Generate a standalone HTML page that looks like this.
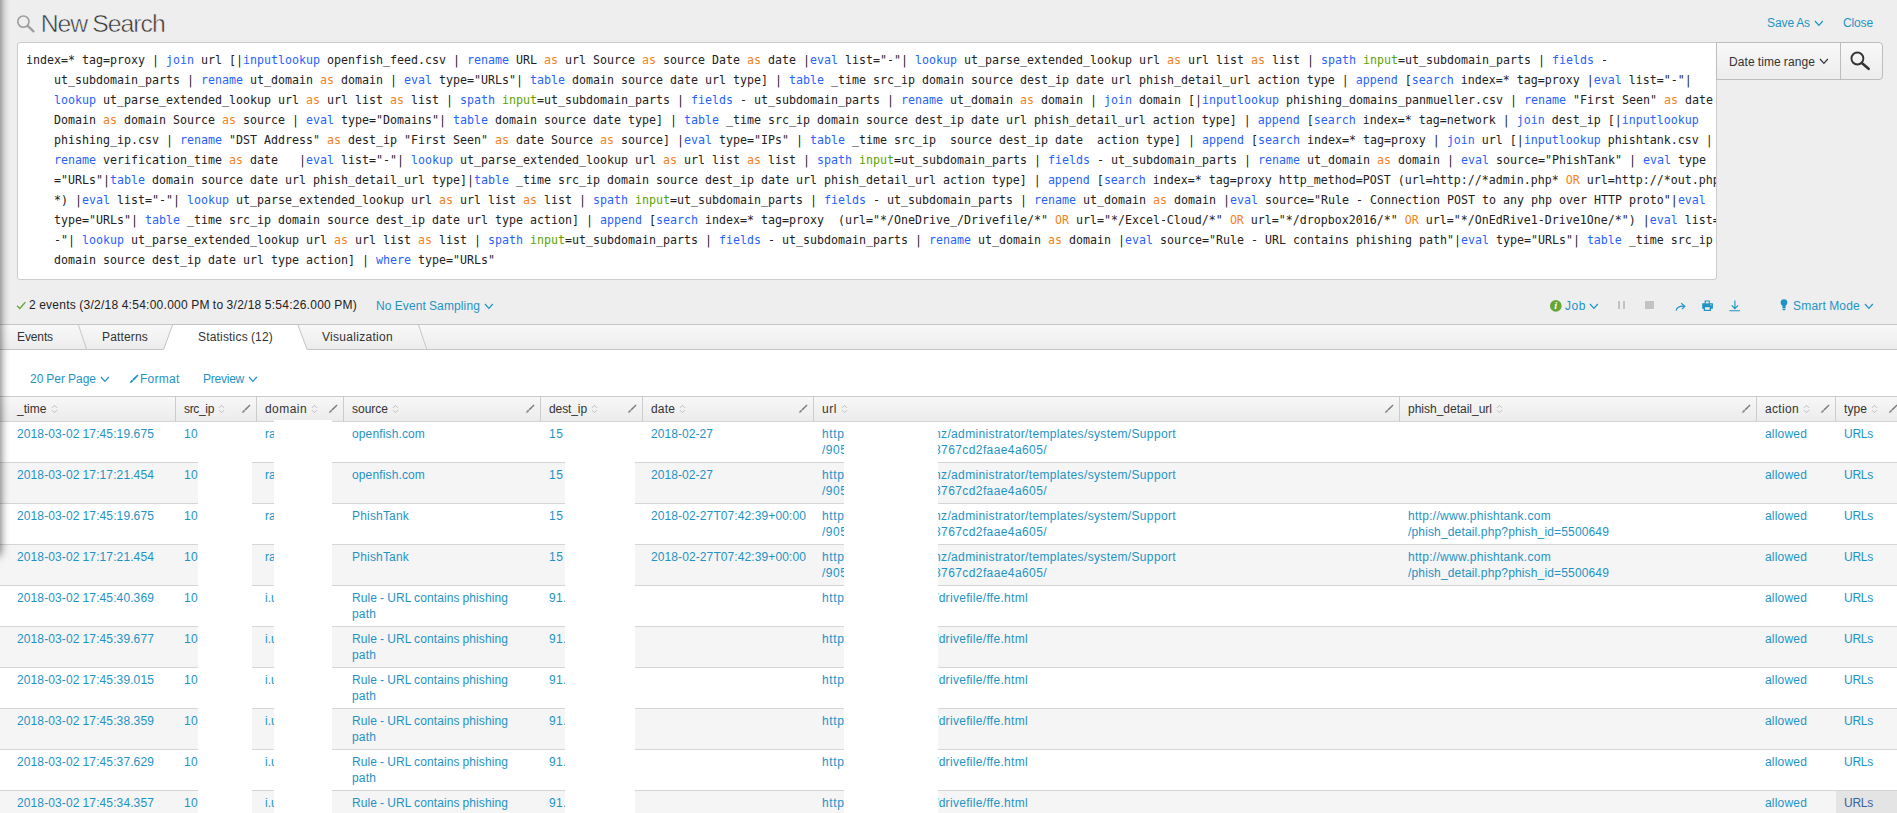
<!DOCTYPE html>
<html><head><meta charset="utf-8"><title>New Search</title>
<style>
*{box-sizing:border-box}
html,body{margin:0;padding:0}
body{width:1897px;height:813px;overflow:hidden;background:#eee;position:relative;font-family:"Liberation Sans",sans-serif;font-size:12px;color:#333}
.abs{position:absolute;white-space:nowrap}
.lnk{color:#1e93c6}
#title{left:41px;top:9px;font-size:24px;line-height:28px;color:#333;letter-spacing:-0.2px}
#qbox{position:absolute;left:17px;top:42px;width:1700px;height:238px;background:#fff;border:1px solid #ccc;border-radius:3px 0 3px 3px;overflow:hidden}
.ql{position:absolute;left:36px;white-space:pre;font-family:"DejaVu Sans Mono",monospace;font-size:11.63px;line-height:20px;height:20px;color:#222}
.q0{left:8px}
.ql b{font-weight:normal;color:#2662fc}
.ql i{font-style:normal;color:#f58220}
.ql u{text-decoration:none;color:#5ba300}
#trbtn{position:absolute;left:1716px;top:42px;width:125px;height:38px;border:1px solid #bcbcbc;border-right:none;background:linear-gradient(#f8f8f8,#ececec);}
#sbtn{position:absolute;left:1840px;top:42px;width:43px;height:38px;border:1px solid #bcbcbc;border-radius:0 4px 4px 0;background:linear-gradient(#f8f8f8,#ececec)}
#tabs{position:absolute;left:0;top:324px;width:1897px;height:26px;border-top:1px solid #c6c6c6;border-bottom:1px solid #c6c6c6;background:linear-gradient(#f8f8f8,#ececec)}
#white{position:absolute;left:0;top:350px;width:1897px;height:463px;background:#fff}
#thead{position:absolute;left:0;top:396px;width:1897px;height:26px;border-top:1px solid #ccc;border-bottom:1px solid #bbb;background:linear-gradient(#f7f7f7,#ececec)}
.th{position:absolute;top:396px;height:26px;border-left:1px solid #ccc;padding-left:8px;line-height:25px;font-size:12px;color:#333;white-space:nowrap}
.row{position:absolute;left:0;width:1897px;height:41px;border-top:1px solid #d5d5d5}
.odd{background:#f5f5f5}
.c{position:absolute;top:4px;line-height:16px;font-size:12px;color:#1e93c6;white-space:nowrap}
.red{position:absolute;background:#fff}
</style></head><body>
<svg class="abs" style="left:15px;top:13px" width="22" height="22" viewBox="0 0 22 22"><circle cx="8.4" cy="8.6" r="5.6" fill="none" stroke="#9e9e9e" stroke-width="1.6"/><path d="M12.7 12.9 L18.5 18.4" stroke="#9e9e9e" stroke-width="2.3" stroke-linecap="round"/></svg>
<div class="abs" style="left:40.7px;top:10px;line-height:28px;font-size:24.8px;letter-spacing:-1.025px;word-spacing:-0.83px;color:#333;-webkit-text-stroke:0.55px #eee;">New Search</div>
<div class="abs" style="left:1767px;top:15px;line-height:16px;letter-spacing:-0.092px;word-spacing:-0.4px;color:#1e93c6;">Save As</div>
<svg class="abs" style="left:1814px;top:20px" width="9.8" height="6.8" viewBox="-1 -1 9.8 6.8"><path d="M0 0 L3.9 4.3 L7.8 0" fill="none" stroke="#1e93c6" stroke-width="1.25"/></svg>
<div class="abs" style="left:1843px;top:15px;line-height:16px;letter-spacing:-0.138px;color:#1e93c6;">Close</div>
<div id="qbox">
<div style="top:7px" class="ql q0">index=* tag=proxy | <b>join</b> url [|<b>inputlookup</b> openfish_feed.csv | <b>rename</b> URL <i>as</i> url Source <i>as</i> source Date <i>as</i> date |<b>eval</b> list="-"| <b>lookup</b> ut_parse_extended_lookup url <i>as</i> url list <i>as</i> list | <b>spath</b> <u>input</u>=ut_subdomain_parts | <b>fields</b> - </div>
<div style="top:27px" class="ql">ut_subdomain_parts | <b>rename</b> ut_domain <i>as</i> domain | <b>eval</b> type="URLs"| <b>table</b> domain source date url type] | <b>table</b> _time src_ip domain source dest_ip date url phish_detail_url action type | <b>append</b> [<b>search</b> index=* tag=proxy |<b>eval</b> list="-"| </div>
<div style="top:47px" class="ql"><b>lookup</b> ut_parse_extended_lookup url <i>as</i> url list <i>as</i> list | <b>spath</b> <u>input</u>=ut_subdomain_parts | <b>fields</b> - ut_subdomain_parts | <b>rename</b> ut_domain <i>as</i> domain | <b>join</b> domain [|<b>inputlookup</b> phishing_domains_panmueller.csv | <b>rename</b> "First Seen" <i>as</i> date </div>
<div style="top:67px" class="ql">Domain <i>as</i> domain Source <i>as</i> source | <b>eval</b> type="Domains"| <b>table</b> domain source date type] | <b>table</b> _time src_ip domain source dest_ip date url phish_detail_url action type] | <b>append</b> [<b>search</b> index=* tag=network | <b>join</b> dest_ip [|<b>inputlookup</b> </div>
<div style="top:87px" class="ql">phishing_ip.csv | <b>rename</b> "DST Address" <i>as</i> dest_ip "First Seen" <i>as</i> date Source <i>as</i> source] |<b>eval</b> type="IPs" | <b>table</b> _time src_ip  source dest_ip date  action type] | <b>append</b> [<b>search</b> index=* tag=proxy | <b>join</b> url [|<b>inputlookup</b> phishtank.csv | </div>
<div style="top:107px" class="ql"><b>rename</b> verification_time <i>as</i> date   |<b>eval</b> list="-"| <b>lookup</b> ut_parse_extended_lookup url <i>as</i> url list <i>as</i> list | <b>spath</b> <u>input</u>=ut_subdomain_parts | <b>fields</b> - ut_subdomain_parts | <b>rename</b> ut_domain <i>as</i> domain | <b>eval</b> source="PhishTank" | <b>eval</b> type </div>
<div style="top:127px" class="ql">="URLs"|<b>table</b> domain source date url phish_detail_url type]|<b>table</b> _time src_ip domain source dest_ip date url phish_detail_url action type] | <b>append</b> [<b>search</b> index=* tag=proxy http_method=POST (url=http://*admin.php* <i>OR</i> url=http://*out.php</div>
<div style="top:147px" class="ql">*) |<b>eval</b> list="-"| <b>lookup</b> ut_parse_extended_lookup url <i>as</i> url list <i>as</i> list | <b>spath</b> <u>input</u>=ut_subdomain_parts | <b>fields</b> - ut_subdomain_parts | <b>rename</b> ut_domain <i>as</i> domain |<b>eval</b> source="Rule - Connection POST to any php over HTTP proto"|<b>eval</b> </div>
<div style="top:167px" class="ql">type="URLs"| <b>table</b> _time src_ip domain source dest_ip date url type action] | <b>append</b> [<b>search</b> index=* tag=proxy  (url="*/OneDrive_/Drivefile/*" <i>OR</i> url="*/Excel-Cloud/*" <i>OR</i> url="*/dropbox2016/*" <i>OR</i> url="*/OnEdRive1-Drive1One/*") |<b>eval</b> list=</div>
<div style="top:187px" class="ql">-"| <b>lookup</b> ut_parse_extended_lookup url <i>as</i> url list <i>as</i> list | <b>spath</b> <u>input</u>=ut_subdomain_parts | <b>fields</b> - ut_subdomain_parts | <b>rename</b> ut_domain <i>as</i> domain |<b>eval</b> source="Rule - URL contains phishing path"|<b>eval</b> type="URLs"| <b>table</b> _time src_ip </div>
<div style="top:207px" class="ql">domain source dest_ip date url type action] | <b>where</b> type="URLs"</div>
</div>
<div id="trbtn"></div><div id="sbtn"></div>
<div class="abs" style="left:1729px;top:54px;line-height:16px;letter-spacing:0.095px;word-spacing:-0.4px;color:#333;">Date time range</div>
<svg class="abs" style="left:1819px;top:58px" width="9.8" height="6.8" viewBox="-1 -1 9.8 6.8"><path d="M0 0 L3.9 4.3 L7.8 0" fill="none" stroke="#333" stroke-width="1.25"/></svg>
<svg class="abs" style="left:1848px;top:48px" width="26" height="26" viewBox="0 0 26 26"><circle cx="9.4" cy="10.5" r="5.95" fill="none" stroke="#333" stroke-width="1.9"/><path d="M13.8 15 L20.6 20.8" stroke="#333" stroke-width="2.6" stroke-linecap="round"/></svg>
<svg class="abs" style="left:16px;top:300px" width="11" height="10" viewBox="0 0 11 10"><path d="M1 5.8 L3.8 8.5 L9.3 2.2" fill="none" stroke="#65a637" stroke-width="1.3"/></svg>
<div class="abs" style="left:29px;top:297px;line-height:16px;letter-spacing:0.263px;word-spacing:-0.4px;color:#222;">2 events (3/2/18 4:54:00.000 PM to 3/2/18 5:54:26.000 PM)</div>
<div class="abs" style="left:376px;top:298px;line-height:16px;letter-spacing:0.122px;word-spacing:-0.4px;color:#1e93c6;">No Event Sampling</div>
<svg class="abs" style="left:484px;top:303px" width="9.8" height="6.8" viewBox="-1 -1 9.8 6.8"><path d="M0 0 L3.9 4.3 L7.8 0" fill="none" stroke="#1e93c6" stroke-width="1.25"/></svg>
<svg class="abs" style="left:1549px;top:299px" width="14" height="14" viewBox="0 0 14 14"><circle cx="6.8" cy="6.9" r="5.85" fill="#65a637"/><text x="6.8" y="10.4" font-family="Liberation Serif,serif" font-style="italic" font-weight="bold" font-size="10.5" fill="#fff" text-anchor="middle">i</text></svg>
<div class="abs" style="left:1565px;top:298px;line-height:16px;letter-spacing:0.547px;color:#1e93c6;">Job</div>
<svg class="abs" style="left:1589px;top:303px" width="9.8" height="6.8" viewBox="-1 -1 9.8 6.8"><path d="M0 0 L3.9 4.3 L7.8 0" fill="none" stroke="#1e93c6" stroke-width="1.25"/></svg>
<div class="abs" style="left:1618px;top:301px;width:2.3px;height:8.3px;background:#c3c3c3"></div><div class="abs" style="left:1623px;top:301px;width:2.3px;height:8.3px;background:#c3c3c3"></div>
<div class="abs" style="left:1645px;top:301px;width:8.6px;height:8.2px;background:#c3c3c3"></div>
<svg class="abs" style="left:1674px;top:299px" width="14" height="14" viewBox="0 0 14 14"><path d="M2 11.7 C2.8 8.6 5.6 6.9 10.4 7.2" fill="none" stroke="#1e93c6" stroke-width="1.15"/><path d="M7.2 4.2 L10.8 7.2 L8 10.2" fill="none" stroke="#1e93c6" stroke-width="1.15"/></svg>
<svg class="abs" style="left:1700px;top:299px" width="14" height="14" viewBox="0 0 14 14"><path d="M4.6 1.4h5.2v2.9h3.1v5.4h-1.9v2.3H3.7V9.7H2.2V4.3h2.4z" fill="#1e93c6"/><rect x="5.8" y="2.5" width="2.9" height="1.9" fill="#eee"/><rect x="5" y="8.2" width="4.6" height="2.6" fill="#eee"/><rect x="10.4" y="5.4" width="1.2" height="1" fill="#eee"/></svg>
<svg class="abs" style="left:1727px;top:299px" width="14" height="14" viewBox="0 0 14 14"><path d="M7.9 1.6 V9.4 M4.7 6.4 L7.9 9.6 L11.1 6.4 M2.4 11.7 H13" fill="none" stroke="#1e93c6" stroke-width="1.15"/></svg>
<svg class="abs" style="left:1777.7px;top:298px" width="12" height="14" viewBox="0 0 12 14"><circle cx="6" cy="4.6" r="3.3" fill="#1e93c6"/><rect x="4.4" y="7" width="3.2" height="3.4" fill="#1e93c6"/><rect x="4.6" y="11" width="2.8" height="1.2" fill="#1e93c6"/></svg>
<div class="abs" style="left:1793px;top:298px;line-height:16px;letter-spacing:0.203px;word-spacing:-0.4px;color:#1e93c6;">Smart Mode</div>
<svg class="abs" style="left:1864px;top:303px" width="9.8" height="6.8" viewBox="-1 -1 9.8 6.8"><path d="M0 0 L3.9 4.3 L7.8 0" fill="none" stroke="#1e93c6" stroke-width="1.25"/></svg>
<div id="tabs"></div><div id="white"></div>
<svg class="abs" style="left:0;top:324px" width="450" height="26" viewBox="0 0 450 26"><path d="M163.7 25.5 L172.7 0.5 L297.8 0.5 L307.1 25.5 V26 H163 Z" fill="#fff" stroke="none"/><path d="M163.7 25.5 L172.7 0.5 H297.8 L307.1 25.5" fill="none" stroke="#c3c3c3" stroke-width="1"/><path d="M78.3 0.5 L86.7 25.5 M418.4 0.5 L426.8 25.5" fill="none" stroke="#c6c6c6"/><rect x="164.6" y="25" width="142" height="1" fill="#fff"/></svg>
<div class="abs" style="left:17px;top:329px;line-height:16px;letter-spacing:-0.115px;color:#333;">Events</div>
<div class="abs" style="left:102px;top:329px;line-height:16px;letter-spacing:0.162px;color:#333;">Patterns</div>
<div class="abs" style="left:198px;top:329px;line-height:16px;letter-spacing:0.18px;word-spacing:-0.4px;color:#333;">Statistics (12)</div>
<div class="abs" style="left:322px;top:329px;line-height:16px;letter-spacing:0.296px;color:#333;">Visualization</div>
<div class="abs" style="left:30px;top:371px;line-height:16px;letter-spacing:0.007px;word-spacing:-0.4px;color:#1e93c6;">20 Per Page</div>
<svg class="abs" style="left:100px;top:376px" width="9.8" height="6.8" viewBox="-1 -1 9.8 6.8"><path d="M0 0 L3.9 4.3 L7.8 0" fill="none" stroke="#1e93c6" stroke-width="1.25"/></svg>
<svg class="abs" style="left:128.6px;top:374px" width="10" height="10" viewBox="0 0 10 10"><path d="M8.4 0.4 L9.5 1.5 L4.7 6.7 L3.3 5.3 Z" fill="#1e93c6"/><path d="M3 5.7 L4.3 7 C3.7 8.5 2 9 0.4 8.7 C1.5 8 1.5 6.3 3 5.7 Z" fill="#1e93c6"/></svg>
<div class="abs" style="left:140px;top:371px;line-height:16px;letter-spacing:0.247px;color:#1e93c6;">Format</div>
<div class="abs" style="left:203px;top:371px;line-height:16px;letter-spacing:-0.241px;color:#1e93c6;">Preview</div>
<svg class="abs" style="left:248px;top:376px" width="9.8" height="6.8" viewBox="-1 -1 9.8 6.8"><path d="M0 0 L3.9 4.3 L7.8 0" fill="none" stroke="#1e93c6" stroke-width="1.25"/></svg>
<div id="thead"></div>
<div class="abs" style="left:17px;top:401px;line-height:16px;letter-spacing:0.031px;color:#333;">_time</div>
<svg class="abs" style="left:50.5px;top:404px" width="7" height="10" viewBox="0 0 7 10"><path d="M1 3.8 L3.5 1.3 L6 3.8 M1 6.2 L3.5 8.7 L6 6.2" fill="none" stroke="#bdbdbd" stroke-width="1"/></svg>
<div class="abs" style="left:175px;top:397px;width:1px;height:24px;background:#ccc"></div>
<div class="abs" style="left:184px;top:401px;line-height:16px;letter-spacing:-0.336px;color:#333;">src_ip</div>
<svg class="abs" style="left:218px;top:404px" width="7" height="10" viewBox="0 0 7 10"><path d="M1 3.8 L3.5 1.3 L6 3.8 M1 6.2 L3.5 8.7 L6 6.2" fill="none" stroke="#bdbdbd" stroke-width="1"/></svg>
<svg class="abs" style="left:240.5px;top:404px" width="10" height="10" viewBox="0 0 10 10"><path d="M8.6 0.5 L9.5 1.4 L4.6 6.6 L3.4 5.4 Z" fill="#7a7a7a"/><path d="M3.1 5.8 L4.2 6.9 C3.6 8.4 2 8.9 0.5 8.6 C1.6 8 1.6 6.4 3.1 5.8 Z" fill="#8f8f8f"/></svg>
<div class="abs" style="left:256px;top:397px;width:1px;height:24px;background:#ccc"></div>
<div class="abs" style="left:265px;top:401px;line-height:16px;letter-spacing:0.44px;color:#333;">domain</div>
<svg class="abs" style="left:311px;top:404px" width="7" height="10" viewBox="0 0 7 10"><path d="M1 3.8 L3.5 1.3 L6 3.8 M1 6.2 L3.5 8.7 L6 6.2" fill="none" stroke="#bdbdbd" stroke-width="1"/></svg>
<svg class="abs" style="left:327.5px;top:404px" width="10" height="10" viewBox="0 0 10 10"><path d="M8.6 0.5 L9.5 1.4 L4.6 6.6 L3.4 5.4 Z" fill="#7a7a7a"/><path d="M3.1 5.8 L4.2 6.9 C3.6 8.4 2 8.9 0.5 8.6 C1.6 8 1.6 6.4 3.1 5.8 Z" fill="#8f8f8f"/></svg>
<div class="abs" style="left:343px;top:397px;width:1px;height:24px;background:#ccc"></div>
<div class="abs" style="left:352px;top:401px;line-height:16px;letter-spacing:-0.005px;color:#333;">source</div>
<svg class="abs" style="left:392px;top:404px" width="7" height="10" viewBox="0 0 7 10"><path d="M1 3.8 L3.5 1.3 L6 3.8 M1 6.2 L3.5 8.7 L6 6.2" fill="none" stroke="#bdbdbd" stroke-width="1"/></svg>
<svg class="abs" style="left:524.5px;top:404px" width="10" height="10" viewBox="0 0 10 10"><path d="M8.6 0.5 L9.5 1.4 L4.6 6.6 L3.4 5.4 Z" fill="#7a7a7a"/><path d="M3.1 5.8 L4.2 6.9 C3.6 8.4 2 8.9 0.5 8.6 C1.6 8 1.6 6.4 3.1 5.8 Z" fill="#8f8f8f"/></svg>
<div class="abs" style="left:540px;top:397px;width:1px;height:24px;background:#ccc"></div>
<div class="abs" style="left:549px;top:401px;line-height:16px;letter-spacing:-0.1px;color:#333;">dest_ip</div>
<svg class="abs" style="left:591px;top:404px" width="7" height="10" viewBox="0 0 7 10"><path d="M1 3.8 L3.5 1.3 L6 3.8 M1 6.2 L3.5 8.7 L6 6.2" fill="none" stroke="#bdbdbd" stroke-width="1"/></svg>
<svg class="abs" style="left:626.5px;top:404px" width="10" height="10" viewBox="0 0 10 10"><path d="M8.6 0.5 L9.5 1.4 L4.6 6.6 L3.4 5.4 Z" fill="#7a7a7a"/><path d="M3.1 5.8 L4.2 6.9 C3.6 8.4 2 8.9 0.5 8.6 C1.6 8 1.6 6.4 3.1 5.8 Z" fill="#8f8f8f"/></svg>
<div class="abs" style="left:642px;top:397px;width:1px;height:24px;background:#ccc"></div>
<div class="abs" style="left:651px;top:401px;line-height:16px;letter-spacing:0.16px;color:#333;">date</div>
<svg class="abs" style="left:679px;top:404px" width="7" height="10" viewBox="0 0 7 10"><path d="M1 3.8 L3.5 1.3 L6 3.8 M1 6.2 L3.5 8.7 L6 6.2" fill="none" stroke="#bdbdbd" stroke-width="1"/></svg>
<svg class="abs" style="left:797.5px;top:404px" width="10" height="10" viewBox="0 0 10 10"><path d="M8.6 0.5 L9.5 1.4 L4.6 6.6 L3.4 5.4 Z" fill="#7a7a7a"/><path d="M3.1 5.8 L4.2 6.9 C3.6 8.4 2 8.9 0.5 8.6 C1.6 8 1.6 6.4 3.1 5.8 Z" fill="#8f8f8f"/></svg>
<div class="abs" style="left:813px;top:397px;width:1px;height:24px;background:#ccc"></div>
<div class="abs" style="left:822px;top:401px;line-height:16px;letter-spacing:0.552px;color:#333;">url</div>
<svg class="abs" style="left:841px;top:404px" width="7" height="10" viewBox="0 0 7 10"><path d="M1 3.8 L3.5 1.3 L6 3.8 M1 6.2 L3.5 8.7 L6 6.2" fill="none" stroke="#bdbdbd" stroke-width="1"/></svg>
<svg class="abs" style="left:1383.5px;top:404px" width="10" height="10" viewBox="0 0 10 10"><path d="M8.6 0.5 L9.5 1.4 L4.6 6.6 L3.4 5.4 Z" fill="#7a7a7a"/><path d="M3.1 5.8 L4.2 6.9 C3.6 8.4 2 8.9 0.5 8.6 C1.6 8 1.6 6.4 3.1 5.8 Z" fill="#8f8f8f"/></svg>
<div class="abs" style="left:1399px;top:397px;width:1px;height:24px;background:#ccc"></div>
<div class="abs" style="left:1408px;top:401px;line-height:16px;letter-spacing:-0.004px;color:#333;">phish_detail_url</div>
<svg class="abs" style="left:1496px;top:404px" width="7" height="10" viewBox="0 0 7 10"><path d="M1 3.8 L3.5 1.3 L6 3.8 M1 6.2 L3.5 8.7 L6 6.2" fill="none" stroke="#bdbdbd" stroke-width="1"/></svg>
<svg class="abs" style="left:1740.5px;top:404px" width="10" height="10" viewBox="0 0 10 10"><path d="M8.6 0.5 L9.5 1.4 L4.6 6.6 L3.4 5.4 Z" fill="#7a7a7a"/><path d="M3.1 5.8 L4.2 6.9 C3.6 8.4 2 8.9 0.5 8.6 C1.6 8 1.6 6.4 3.1 5.8 Z" fill="#8f8f8f"/></svg>
<div class="abs" style="left:1756px;top:397px;width:1px;height:24px;background:#ccc"></div>
<div class="abs" style="left:1765px;top:401px;line-height:16px;letter-spacing:0.328px;color:#333;">action</div>
<svg class="abs" style="left:1803px;top:404px" width="7" height="10" viewBox="0 0 7 10"><path d="M1 3.8 L3.5 1.3 L6 3.8 M1 6.2 L3.5 8.7 L6 6.2" fill="none" stroke="#bdbdbd" stroke-width="1"/></svg>
<svg class="abs" style="left:1819.5px;top:404px" width="10" height="10" viewBox="0 0 10 10"><path d="M8.6 0.5 L9.5 1.4 L4.6 6.6 L3.4 5.4 Z" fill="#7a7a7a"/><path d="M3.1 5.8 L4.2 6.9 C3.6 8.4 2 8.9 0.5 8.6 C1.6 8 1.6 6.4 3.1 5.8 Z" fill="#8f8f8f"/></svg>
<div class="abs" style="left:1835px;top:397px;width:1px;height:24px;background:#ccc"></div>
<div class="abs" style="left:1844px;top:401px;line-height:16px;letter-spacing:0.078px;color:#333;">type</div>
<svg class="abs" style="left:1871px;top:404px" width="7" height="10" viewBox="0 0 7 10"><path d="M1 3.8 L3.5 1.3 L6 3.8 M1 6.2 L3.5 8.7 L6 6.2" fill="none" stroke="#bdbdbd" stroke-width="1"/></svg>
<svg class="abs" style="left:1887.5px;top:404px" width="10" height="10" viewBox="0 0 10 10"><path d="M8.6 0.5 L9.5 1.4 L4.6 6.6 L3.4 5.4 Z" fill="#7a7a7a"/><path d="M3.1 5.8 L4.2 6.9 C3.6 8.4 2 8.9 0.5 8.6 C1.6 8 1.6 6.4 3.1 5.8 Z" fill="#8f8f8f"/></svg>
<div class="row" style="top:421px"></div>
<div class="abs" style="left:17px;top:426px;line-height:16px;letter-spacing:0.113px;word-spacing:-0.4px;color:#1e93c6;">2018-03-02 17:45:19.675</div>
<div class="abs" style="left:184px;top:426px;line-height:16px;letter-spacing:0.27px;color:#1e93c6;">10</div>
<div class="abs" style="left:265px;top:426px;line-height:16px;color:#1e93c6;">ra</div>
<div class="abs" style="left:352px;top:426px;line-height:16px;letter-spacing:0.135px;color:#1e93c6;">openfish.com</div>
<div class="abs" style="left:549px;top:426px;line-height:16px;letter-spacing:0.47px;color:#1e93c6;">15</div>
<div class="abs" style="left:651px;top:426px;line-height:16px;letter-spacing:0.061px;color:#1e93c6;">2018-02-27</div>
<div class="abs" style="left:822px;top:426px;line-height:16px;letter-spacing:0.621px;color:#1e93c6;">http</div>
<div class="abs" style="left:822px;top:442px;line-height:16px;letter-spacing:0.535px;color:#1e93c6;">/905</div>
<div class="abs" style="left:934px;top:426px;line-height:16px;letter-spacing:0.355px;color:#1e93c6;">nz/administrator/templates/system/Support</div>
<div class="abs" style="left:934px;top:442px;line-height:16px;letter-spacing:0.405px;color:#1e93c6;">8767cd2faae4a605/</div>
<div class="abs" style="left:1765px;top:426px;line-height:16px;letter-spacing:0.185px;color:#1e93c6;">allowed</div>
<div class="abs" style="left:1844px;top:426px;line-height:16px;letter-spacing:-0.254px;color:#1e93c6;">URLs</div>
<div class="row odd" style="top:462px"></div>
<div class="abs" style="left:17px;top:467px;line-height:16px;letter-spacing:0.113px;word-spacing:-0.4px;color:#1e93c6;">2018-03-02 17:17:21.454</div>
<div class="abs" style="left:184px;top:467px;line-height:16px;letter-spacing:0.27px;color:#1e93c6;">10</div>
<div class="abs" style="left:265px;top:467px;line-height:16px;color:#1e93c6;">ra</div>
<div class="abs" style="left:352px;top:467px;line-height:16px;letter-spacing:0.135px;color:#1e93c6;">openfish.com</div>
<div class="abs" style="left:549px;top:467px;line-height:16px;letter-spacing:0.47px;color:#1e93c6;">15</div>
<div class="abs" style="left:651px;top:467px;line-height:16px;letter-spacing:0.061px;color:#1e93c6;">2018-02-27</div>
<div class="abs" style="left:822px;top:467px;line-height:16px;letter-spacing:0.621px;color:#1e93c6;">http</div>
<div class="abs" style="left:822px;top:483px;line-height:16px;letter-spacing:0.535px;color:#1e93c6;">/905</div>
<div class="abs" style="left:934px;top:467px;line-height:16px;letter-spacing:0.355px;color:#1e93c6;">nz/administrator/templates/system/Support</div>
<div class="abs" style="left:934px;top:483px;line-height:16px;letter-spacing:0.405px;color:#1e93c6;">8767cd2faae4a605/</div>
<div class="abs" style="left:1765px;top:467px;line-height:16px;letter-spacing:0.185px;color:#1e93c6;">allowed</div>
<div class="abs" style="left:1844px;top:467px;line-height:16px;letter-spacing:-0.254px;color:#1e93c6;">URLs</div>
<div class="row" style="top:503px"></div>
<div class="abs" style="left:17px;top:508px;line-height:16px;letter-spacing:0.113px;word-spacing:-0.4px;color:#1e93c6;">2018-03-02 17:45:19.675</div>
<div class="abs" style="left:184px;top:508px;line-height:16px;letter-spacing:0.27px;color:#1e93c6;">10</div>
<div class="abs" style="left:265px;top:508px;line-height:16px;color:#1e93c6;">ra</div>
<div class="abs" style="left:352px;top:508px;line-height:16px;letter-spacing:0.181px;color:#1e93c6;">PhishTank</div>
<div class="abs" style="left:549px;top:508px;line-height:16px;letter-spacing:0.47px;color:#1e93c6;">15</div>
<div class="abs" style="left:651px;top:508px;line-height:16px;letter-spacing:0.101px;color:#1e93c6;">2018-02-27T07:42:39+00:00</div>
<div class="abs" style="left:822px;top:508px;line-height:16px;letter-spacing:0.621px;color:#1e93c6;">http</div>
<div class="abs" style="left:822px;top:524px;line-height:16px;letter-spacing:0.535px;color:#1e93c6;">/905</div>
<div class="abs" style="left:934px;top:508px;line-height:16px;letter-spacing:0.355px;color:#1e93c6;">nz/administrator/templates/system/Support</div>
<div class="abs" style="left:934px;top:524px;line-height:16px;letter-spacing:0.405px;color:#1e93c6;">8767cd2faae4a605/</div>
<div class="abs" style="left:1408px;top:508px;line-height:16px;letter-spacing:0.289px;color:#1e93c6;">http://www.phishtank.com</div>
<div class="abs" style="left:1408px;top:524px;line-height:16px;letter-spacing:0.152px;color:#1e93c6;">/phish_detail.php?phish_id=5500649</div>
<div class="abs" style="left:1765px;top:508px;line-height:16px;letter-spacing:0.185px;color:#1e93c6;">allowed</div>
<div class="abs" style="left:1844px;top:508px;line-height:16px;letter-spacing:-0.254px;color:#1e93c6;">URLs</div>
<div class="row odd" style="top:544px"></div>
<div class="abs" style="left:17px;top:549px;line-height:16px;letter-spacing:0.113px;word-spacing:-0.4px;color:#1e93c6;">2018-03-02 17:17:21.454</div>
<div class="abs" style="left:184px;top:549px;line-height:16px;letter-spacing:0.27px;color:#1e93c6;">10</div>
<div class="abs" style="left:265px;top:549px;line-height:16px;color:#1e93c6;">ra</div>
<div class="abs" style="left:352px;top:549px;line-height:16px;letter-spacing:0.181px;color:#1e93c6;">PhishTank</div>
<div class="abs" style="left:549px;top:549px;line-height:16px;letter-spacing:0.47px;color:#1e93c6;">15</div>
<div class="abs" style="left:651px;top:549px;line-height:16px;letter-spacing:0.101px;color:#1e93c6;">2018-02-27T07:42:39+00:00</div>
<div class="abs" style="left:822px;top:549px;line-height:16px;letter-spacing:0.621px;color:#1e93c6;">http</div>
<div class="abs" style="left:822px;top:565px;line-height:16px;letter-spacing:0.535px;color:#1e93c6;">/905</div>
<div class="abs" style="left:934px;top:549px;line-height:16px;letter-spacing:0.355px;color:#1e93c6;">nz/administrator/templates/system/Support</div>
<div class="abs" style="left:934px;top:565px;line-height:16px;letter-spacing:0.405px;color:#1e93c6;">8767cd2faae4a605/</div>
<div class="abs" style="left:1408px;top:549px;line-height:16px;letter-spacing:0.289px;color:#1e93c6;">http://www.phishtank.com</div>
<div class="abs" style="left:1408px;top:565px;line-height:16px;letter-spacing:0.152px;color:#1e93c6;">/phish_detail.php?phish_id=5500649</div>
<div class="abs" style="left:1765px;top:549px;line-height:16px;letter-spacing:0.185px;color:#1e93c6;">allowed</div>
<div class="abs" style="left:1844px;top:549px;line-height:16px;letter-spacing:-0.254px;color:#1e93c6;">URLs</div>
<div class="row" style="top:585px"></div>
<div class="abs" style="left:17px;top:590px;line-height:16px;letter-spacing:0.113px;word-spacing:-0.4px;color:#1e93c6;">2018-03-02 17:45:40.369</div>
<div class="abs" style="left:184px;top:590px;line-height:16px;letter-spacing:0.27px;color:#1e93c6;">10</div>
<div class="abs" style="left:265px;top:590px;line-height:16px;color:#1e93c6;">i.u</div>
<div class="abs" style="left:352px;top:590px;line-height:16px;letter-spacing:0.094px;word-spacing:-0.4px;color:#1e93c6;">Rule - URL contains phishing</div>
<div class="abs" style="left:352px;top:606px;line-height:16px;letter-spacing:0.16px;color:#1e93c6;">path</div>
<div class="abs" style="left:549px;top:590px;line-height:16px;letter-spacing:0.304px;color:#1e93c6;">91.</div>
<div class="abs" style="left:822px;top:590px;line-height:16px;letter-spacing:0.621px;color:#1e93c6;">http</div>
<div class="abs" style="left:928px;top:590px;line-height:16px;letter-spacing:0.309px;color:#1e93c6;">e/drivefile/ffe.html</div>
<div class="abs" style="left:1765px;top:590px;line-height:16px;letter-spacing:0.185px;color:#1e93c6;">allowed</div>
<div class="abs" style="left:1844px;top:590px;line-height:16px;letter-spacing:-0.254px;color:#1e93c6;">URLs</div>
<div class="row odd" style="top:626px"></div>
<div class="abs" style="left:17px;top:631px;line-height:16px;letter-spacing:0.113px;word-spacing:-0.4px;color:#1e93c6;">2018-03-02 17:45:39.677</div>
<div class="abs" style="left:184px;top:631px;line-height:16px;letter-spacing:0.27px;color:#1e93c6;">10</div>
<div class="abs" style="left:265px;top:631px;line-height:16px;color:#1e93c6;">i.u</div>
<div class="abs" style="left:352px;top:631px;line-height:16px;letter-spacing:0.094px;word-spacing:-0.4px;color:#1e93c6;">Rule - URL contains phishing</div>
<div class="abs" style="left:352px;top:647px;line-height:16px;letter-spacing:0.16px;color:#1e93c6;">path</div>
<div class="abs" style="left:549px;top:631px;line-height:16px;letter-spacing:0.304px;color:#1e93c6;">91.</div>
<div class="abs" style="left:822px;top:631px;line-height:16px;letter-spacing:0.621px;color:#1e93c6;">http</div>
<div class="abs" style="left:928px;top:631px;line-height:16px;letter-spacing:0.309px;color:#1e93c6;">e/drivefile/ffe.html</div>
<div class="abs" style="left:1765px;top:631px;line-height:16px;letter-spacing:0.185px;color:#1e93c6;">allowed</div>
<div class="abs" style="left:1844px;top:631px;line-height:16px;letter-spacing:-0.254px;color:#1e93c6;">URLs</div>
<div class="row" style="top:667px"></div>
<div class="abs" style="left:17px;top:672px;line-height:16px;letter-spacing:0.113px;word-spacing:-0.4px;color:#1e93c6;">2018-03-02 17:45:39.015</div>
<div class="abs" style="left:184px;top:672px;line-height:16px;letter-spacing:0.27px;color:#1e93c6;">10</div>
<div class="abs" style="left:265px;top:672px;line-height:16px;color:#1e93c6;">i.u</div>
<div class="abs" style="left:352px;top:672px;line-height:16px;letter-spacing:0.094px;word-spacing:-0.4px;color:#1e93c6;">Rule - URL contains phishing</div>
<div class="abs" style="left:352px;top:688px;line-height:16px;letter-spacing:0.16px;color:#1e93c6;">path</div>
<div class="abs" style="left:549px;top:672px;line-height:16px;letter-spacing:0.304px;color:#1e93c6;">91.</div>
<div class="abs" style="left:822px;top:672px;line-height:16px;letter-spacing:0.621px;color:#1e93c6;">http</div>
<div class="abs" style="left:928px;top:672px;line-height:16px;letter-spacing:0.309px;color:#1e93c6;">e/drivefile/ffe.html</div>
<div class="abs" style="left:1765px;top:672px;line-height:16px;letter-spacing:0.185px;color:#1e93c6;">allowed</div>
<div class="abs" style="left:1844px;top:672px;line-height:16px;letter-spacing:-0.254px;color:#1e93c6;">URLs</div>
<div class="row odd" style="top:708px"></div>
<div class="abs" style="left:17px;top:713px;line-height:16px;letter-spacing:0.113px;word-spacing:-0.4px;color:#1e93c6;">2018-03-02 17:45:38.359</div>
<div class="abs" style="left:184px;top:713px;line-height:16px;letter-spacing:0.27px;color:#1e93c6;">10</div>
<div class="abs" style="left:265px;top:713px;line-height:16px;color:#1e93c6;">i.u</div>
<div class="abs" style="left:352px;top:713px;line-height:16px;letter-spacing:0.094px;word-spacing:-0.4px;color:#1e93c6;">Rule - URL contains phishing</div>
<div class="abs" style="left:352px;top:729px;line-height:16px;letter-spacing:0.16px;color:#1e93c6;">path</div>
<div class="abs" style="left:549px;top:713px;line-height:16px;letter-spacing:0.304px;color:#1e93c6;">91.</div>
<div class="abs" style="left:822px;top:713px;line-height:16px;letter-spacing:0.621px;color:#1e93c6;">http</div>
<div class="abs" style="left:928px;top:713px;line-height:16px;letter-spacing:0.309px;color:#1e93c6;">e/drivefile/ffe.html</div>
<div class="abs" style="left:1765px;top:713px;line-height:16px;letter-spacing:0.185px;color:#1e93c6;">allowed</div>
<div class="abs" style="left:1844px;top:713px;line-height:16px;letter-spacing:-0.254px;color:#1e93c6;">URLs</div>
<div class="row" style="top:749px"></div>
<div class="abs" style="left:17px;top:754px;line-height:16px;letter-spacing:0.113px;word-spacing:-0.4px;color:#1e93c6;">2018-03-02 17:45:37.629</div>
<div class="abs" style="left:184px;top:754px;line-height:16px;letter-spacing:0.27px;color:#1e93c6;">10</div>
<div class="abs" style="left:265px;top:754px;line-height:16px;color:#1e93c6;">i.u</div>
<div class="abs" style="left:352px;top:754px;line-height:16px;letter-spacing:0.094px;word-spacing:-0.4px;color:#1e93c6;">Rule - URL contains phishing</div>
<div class="abs" style="left:352px;top:770px;line-height:16px;letter-spacing:0.16px;color:#1e93c6;">path</div>
<div class="abs" style="left:549px;top:754px;line-height:16px;letter-spacing:0.304px;color:#1e93c6;">91.</div>
<div class="abs" style="left:822px;top:754px;line-height:16px;letter-spacing:0.621px;color:#1e93c6;">http</div>
<div class="abs" style="left:928px;top:754px;line-height:16px;letter-spacing:0.309px;color:#1e93c6;">e/drivefile/ffe.html</div>
<div class="abs" style="left:1765px;top:754px;line-height:16px;letter-spacing:0.185px;color:#1e93c6;">allowed</div>
<div class="abs" style="left:1844px;top:754px;line-height:16px;letter-spacing:-0.254px;color:#1e93c6;">URLs</div>
<div class="row odd" style="top:790px"></div>
<div class="abs" style="left:1836px;top:791px;width:61px;height:40px;background:#e4e4e4"></div>
<div class="abs" style="left:17px;top:795px;line-height:16px;letter-spacing:0.113px;word-spacing:-0.4px;color:#1e93c6;">2018-03-02 17:45:34.357</div>
<div class="abs" style="left:184px;top:795px;line-height:16px;letter-spacing:0.27px;color:#1e93c6;">10</div>
<div class="abs" style="left:265px;top:795px;line-height:16px;color:#1e93c6;">i.u</div>
<div class="abs" style="left:352px;top:795px;line-height:16px;letter-spacing:0.094px;word-spacing:-0.4px;color:#1e93c6;">Rule - URL contains phishing</div>
<div class="abs" style="left:352px;top:811px;line-height:16px;letter-spacing:0.16px;color:#1e93c6;">path</div>
<div class="abs" style="left:549px;top:795px;line-height:16px;letter-spacing:0.304px;color:#1e93c6;">91.</div>
<div class="abs" style="left:822px;top:795px;line-height:16px;letter-spacing:0.621px;color:#1e93c6;">http</div>
<div class="abs" style="left:928px;top:795px;line-height:16px;letter-spacing:0.309px;color:#1e93c6;">e/drivefile/ffe.html</div>
<div class="abs" style="left:1765px;top:795px;line-height:16px;letter-spacing:0.185px;color:#1e93c6;">allowed</div>
<div class="abs" style="left:1844px;top:795px;line-height:16px;letter-spacing:-0.254px;color:#3863a0;">URLs</div>
<div class="red" style="left:198px;top:422px;width:54px;height:391px"></div>
<div class="red" style="left:274px;top:420px;width:58px;height:393px"></div>
<div class="red" style="left:565px;top:422px;width:70px;height:391px"></div>
<div class="red" style="left:844px;top:422px;width:94px;height:391px"></div>
<div class="abs" style="left:-12px;top:-20px;width:12px;height:576px;border-radius:0 0 6px 0;box-shadow:0 0 8px 1px rgba(0,0,0,.56)"></div>
</body></html>
